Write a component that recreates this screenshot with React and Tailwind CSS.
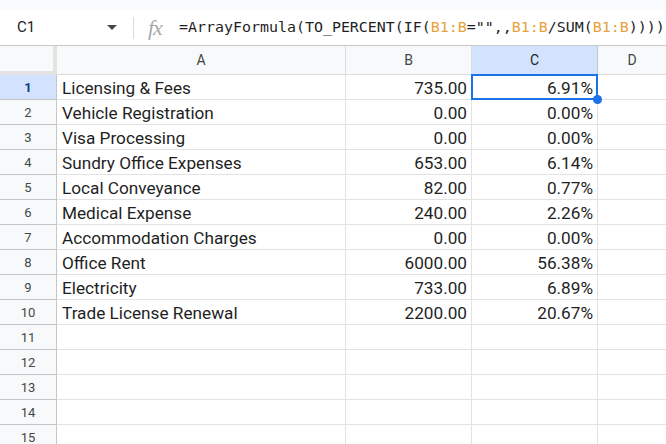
import React from 'react';

const rows = [
  ['Licensing & Fees', '735.00', '6.91%'],
  ['Vehicle Registration', '0.00', '0.00%'],
  ['Visa Processing', '0.00', '0.00%'],
  ['Sundry Office Expenses', '653.00', '6.14%'],
  ['Local Conveyance', '82.00', '0.77%'],
  ['Medical Expense', '240.00', '2.26%'],
  ['Accommodation Charges', '0.00', '0.00%'],
  ['Office Rent', '6000.00', '56.38%'],
  ['Electricity', '733.00', '6.89%'],
  ['Trade License Renewal', '2200.00', '20.67%'],
  ['', '', ''],
  ['', '', ''],
  ['', '', ''],
  ['', '', ''],
  ['', '', ''],
];

const Ref = ({ children }) => <span className="text-[#e8a23c]">{children}</span>;

export default function App() {
  return (
    <div className="w-[666px] h-[444px] overflow-hidden bg-white font-['Roboto',sans-serif] text-[#1f1f1f]">
      {/* top strip */}
      <div className="h-[10px] bg-[#f9fbfd]" />

      {/* formula bar */}
      <div className="h-[36px] flex items-center border-b border-[#c7c7c7] bg-white">
        <div className="w-[100px] pl-[17px] text-[15px] text-[#1f1f1f]">C1</div>
        <svg width="10" height="6" viewBox="0 0 10 6" className="ml-[7px]">
          <path d="M0 0 L10 0 L5 5 Z" fill="#444746" />
        </svg>
        <div className="ml-[16px] w-px h-[22px] bg-[#dadce0]" />
        <div className="ml-[14px] w-[28px] font-['Liberation_Serif',serif] italic text-[22px] leading-none text-[#a8a8a8] tracking-[-1px]">
          fx
        </div>
        <div className="ml-[3px] font-['DejaVu_Sans_Mono',monospace] text-[14.95px] whitespace-nowrap">
          =ArrayFormula(TO_PERCENT(IF(<Ref>B1:B</Ref>="",,<Ref>B1:B</Ref>/SUM(<Ref>B1:B</Ref>))))
        </div>
      </div>

      {/* column headers */}
      <div className="flex h-[29px] bg-[#f8f9fa] text-[14px] text-[#444746]">
        <div className="w-[57px] shrink-0 border-r-[4px] border-b-[4px] border-[#e3e3e3]" />
        <div className="w-[289px] shrink-0 flex items-center justify-center pt-[1px] border-r border-b border-[#dadce0]">A</div>
        <div className="w-[126px] shrink-0 flex items-center justify-center pt-[1px] border-r border-b border-[#dadce0]">B</div>
        <div className="w-[126px] shrink-0 flex items-center justify-center pt-[1px] bg-[#d3e3fd] text-[#1f1f1f] border-r border-b border-[#c4c7c5]">C</div>
        <div className="flex-1 flex items-center justify-center pt-[1px] border-b border-[#dadce0]">D</div>
      </div>

      {/* data rows */}
      {rows.map((r, i) => (
        <div key={i} className="flex h-[25px]">
          <div
            className={`w-[57px] shrink-0 flex items-center justify-center pt-[2px] text-[13px] border-r border-b border-[#c4c7c5] ${
              i === 0 ? 'bg-[#d3e3fd] font-bold text-[#0b3a8a]' : 'bg-[#f8f9fa] text-[#444746]'
            }`}
          >
            {i + 1}
          </div>
          <div className="w-[289px] shrink-0 flex items-end pb-[2px] pl-[5px] text-[17.2px] leading-none border-r border-b border-[#e2e2e3] whitespace-nowrap">
            {r[0]}
          </div>
          <div className="w-[126px] shrink-0 flex items-end justify-end pb-[2px] pr-[4px] text-[17.2px] leading-none border-r border-b border-[#e2e2e3]">
            {r[1]}
          </div>
          <div className="relative w-[126px] shrink-0 flex items-end justify-end pb-[2px] pr-[4px] text-[17.2px] leading-none border-r border-b border-[#e2e2e3]">
            {r[2]}
            {i === 0 && (
              <>
                <div className="absolute -left-px -top-px w-[127px] h-[26px] border-2 border-[#1a73e8] pointer-events-none" />
                <div className="absolute -right-[5px] -bottom-[5px] w-[9px] h-[9px] rounded-full bg-[#1a73e8] z-10" />
              </>
            )}
          </div>
          <div className="flex-1 border-b border-[#e2e2e3]" />
        </div>
      ))}
    </div>
  );
}
